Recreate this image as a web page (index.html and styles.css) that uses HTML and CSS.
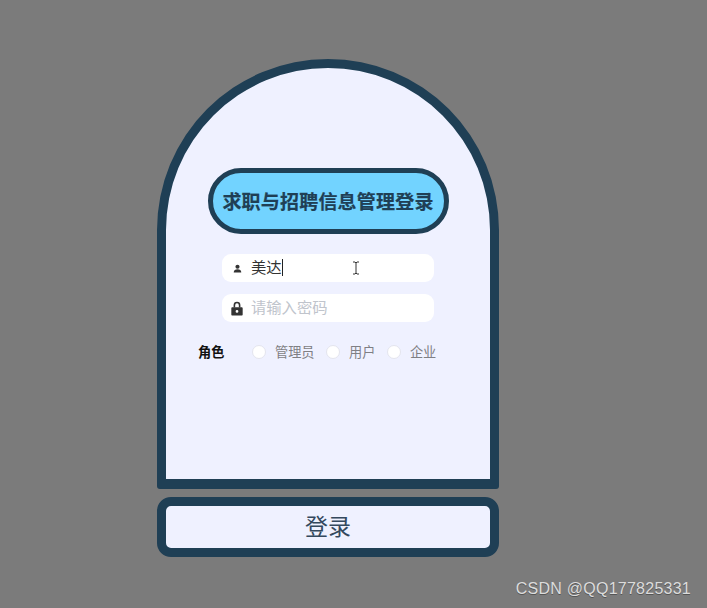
FILE: index.html
```html
<!DOCTYPE html>
<html lang="zh-CN">
<head>
    <meta charset="UTF-8">
    <meta name="viewport" content="width=device-width, initial-scale=1.0">
    <title>求职与招聘信息管理登录</title>
    <link rel="stylesheet" href="styles.css">
</head>
<body>
    <section class="login">
        <div class="card">
            <h1 class="title">求职与招聘信息管理登录</h1>
            <div class="field field-user">
                <svg class="icon-user" viewBox="0 0 10 10"><circle cx="5" cy="3" r="2.3"/><path d="M0.8 9.4C0.8 6.9 2.6 5.9 5 5.9s4.2 1 4.2 3.5z"/></svg>
                <span class="value">美达</span><span class="caret"></span>
                <svg class="ibeam" viewBox="0 0 8 14"><path d="M1 1h2l1 1 1-1h2M4 2v10M1 13h2l1-1 1 1h2" fill="none" stroke="#333" stroke-width="1"/></svg>
            </div>
            <div class="field">
                <svg class="icon-lock" viewBox="0 0 11 14"><path d="M2.3 6V3.9a3.2 3.2 0 0 1 6.4 0V6H7.2V3.9a1.7 1.7 0 0 0-3.4 0V6z"/><path fill-rule="evenodd" d="M1.2 5.8h8.6c.6 0 1 .4 1 1v5.8c0 .6-.4 1-1 1H1.2c-.6 0-1-.4-1-1V6.8c0-.6.4-1 1-1zM5.5 8.4a1.3 1.3 0 1 0 0 2.6 1.3 1.3 0 0 0 0-2.6z"/></svg>
                <span class="placeholder">请输入密码</span>
            </div>
            <div class="roles">
                <span class="roles-label">角色</span>
                <span class="radio"></span><span class="role">管理员</span>
                <span class="radio"></span><span class="role">用户</span>
                <span class="radio"></span><span class="role">企业</span>
            </div>
        </div>
        <button class="submit">登录</button>
    </section>
    <div class="watermark">CSDN @QQ177825331</div>
</body>
</html>
```

FILE: styles.css
```css
*{
    padding: 0;
    margin: 0;
    box-sizing: border-box;
}
body{
    height: 100vh;
    overflow: hidden;
    background: #7b7b7b;
    font-family: "Noto Sans CJK SC", "Liberation Sans", sans-serif;
}
.login{
    width: 342px;
    margin-left: 157px;
    padding-top: 59px;
    display: flex;
    flex-direction: column;
    gap: 8px;
}
.card{
    height: 430px;
    background: #eff1ff;
    border: 9px solid #1f3f55;
    border-bottom-width: 10px;
    border-radius: 171px 171px 3px 3px;
    padding-top: 100px;
    display: flex;
    flex-direction: column;
    align-items: center;
}
.title{
    width: 241px;
    height: 66px;
    background: #72d3ff;
    border: 5px solid #1f3f55;
    border-radius: 33px;
    color: #1f3f55;
    font-size: 19px;
    font-weight: 700;
    letter-spacing: 0.2px;
    line-height: 55px;
    text-align: center;
    white-space: nowrap;
    -webkit-text-stroke: 0.2px #1f3f55;
}
.field{
    position: relative;
    width: 212px;
    height: 28px;
    margin-top: 12px;
    background: #fff;
    border-radius: 9px;
    display: flex;
    align-items: center;
    padding-left: 29px;
    font-size: 15.3px;
    line-height: 26px;
}
.field-user{
    margin-top: 20px;
}
.icon-user{
    position: absolute;
    left: 11px;
    top: 10px;
    width: 9px;
    height: 9px;
    fill: #333;
}
.icon-lock{
    position: absolute;
    left: 9px;
    top: 7px;
    width: 12px;
    height: 15px;
    fill: #333;
}
.value{
    color: #333;
    margin-bottom: 4px;
}
.caret{
    width: 1px;
    height: 17px;
    background: #222;
    margin-bottom: 1px;
}
.ibeam{
    position: absolute;
    left: 130px;
    top: 7px;
    width: 8px;
    height: 14px;
}
.placeholder{
    color: #c0c4cc;
    margin-bottom: 4px;
}
.roles{
    align-self: flex-start;
    margin: 21px 0 0 32px;
    height: 16px;
    display: flex;
    align-items: center;
    font-size: 13.2px;
    color: #7f7f84;
}
.roles-label{
    width: 54px;
    color: #111;
    font-weight: 700;
}
.radio{
    width: 14px;
    height: 14px;
    background: #fff;
    border: 1px solid #e4e5ee;
    border-radius: 50%;
    margin: 2px 9px 0 0;
}
.role{
    margin-right: 11.5px;
}
.submit{
    width: 342px;
    height: 60px;
    background: #eff1ff;
    border: 9px solid #1f3f55;
    border-radius: 14px;
    color: #34495e;
    font-family: inherit;
    font-size: 23px;
    line-height: 38px;
    padding-bottom: 5px;
}
.watermark{
    position: absolute;
    right: 16px;
    top: 580px;
    color: #dcdcdc;
    font-family: "Liberation Sans", sans-serif;
    font-size: 16px;
    letter-spacing: 0.25px;
    line-height: 18px;
    text-shadow: 0 1px 0 #555;
}
```
